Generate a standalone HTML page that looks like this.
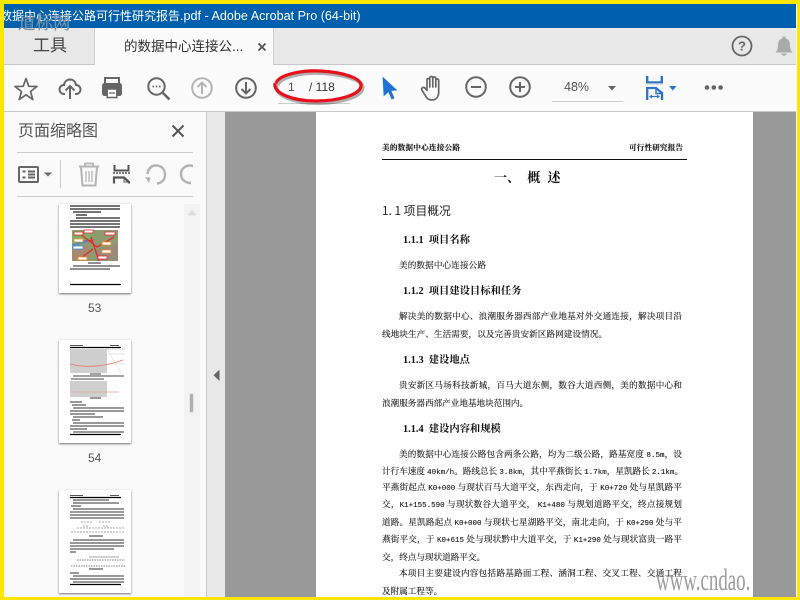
<!DOCTYPE html>
<html><head><meta charset="utf-8">
<style>
html,body{margin:0;padding:0;background:#fff}
#r{position:relative;width:800px;height:600px;overflow:hidden;background:#ffe600;font-family:"Liberation Sans","Noto Sans CJK SC",sans-serif}
#r div{position:absolute}
svg{position:absolute;overflow:visible}
.t{font-family:"Noto Serif CJK SC",serif;font-size:8.6px;line-height:12px;color:#111;white-space:nowrap;text-align:justify;text-align-last:justify;height:12px;filter:blur(.22px);-webkit-text-stroke:.12px #222}
.m{font-family:"Liberation Mono",monospace;font-size:7.5px}
.h{font-family:"Liberation Serif","Noto Serif CJK SC",serif;font-weight:700;font-size:10.3px;line-height:12px;color:#111;white-space:nowrap;filter:blur(.2px)}
.th{background:#fff;box-shadow:0 1px 2px rgba(0,0,0,.55);overflow:hidden}
.b{filter:blur(.35px)}
</style></head><body>
<div id="r">
<div style="left:4px;top:4px;width:793px;height:593px;background:#fff"></div>
<div style="left:4px;top:4px;width:792px;height:24px;background:#0060ae;overflow:hidden">
<div style="left:-4px;top:0;color:#fff;font-size:12.6px;line-height:25px;white-space:nowrap"><span style="font-size:12px">数据中心连接公路可行性研究报告</span>.pdf - Adobe Acrobat Pro (64-bit)</div>
</div>

<div style="left:4px;top:28px;width:792px;height:36px;background:#e8e8e8;border-bottom:1px solid #c8c8c8"></div>
<div style="left:94px;top:28px;width:180px;height:37px;background:#fbfbfb;border-left:1px solid #ccc;border-right:1px solid #ccc;box-sizing:border-box"></div>
<div style="left:18px;top:12px;font-family:'Noto Serif CJK SC',serif;font-size:17.500px;line-height:22px;color:#7f93a3;-webkit-text-stroke:.3px #7f93a3">道标网</div>
<div style="left:33px;top:36px;font-size:17px;line-height:20px;color:#444">工具</div>
<div style="left:124px;top:39px;font-size:13.500px;line-height:16px;color:#333;white-space:nowrap">的数据中心连接公...</div>
<svg style="left:257px;top:42px" width="10" height="10"><path d="M1.500 1.500L8.500 8.500M8.500 1.500L1.500 8.500" stroke="#555" stroke-width="1.800"/></svg>
<svg style="left:731px;top:35px" width="22" height="22"><circle cx="11" cy="11" r="9.500" fill="none" stroke="#666" stroke-width="1.800"/><text x="11" y="15.500" font-size="13" font-weight="700" fill="#666" text-anchor="middle" font-family="Liberation Sans">?</text></svg>
<svg style="left:775px;top:36px" width="18" height="21"><path d="M9 .5C10.200 .5 10.800 1.200 10.800 2.500C14.500 3.500 15 7 15 10C15 13 16 14.500 17.500 16.500L.5 16.500C2 14.500 3 13 3 10C3 7 3.500 3.500 7.200 2.500C7.200 1.200 7.800 .5 9 .5Z" fill="#aaa"/><path d="M6 17.500H12C11.500 20.300 6.500 20.300 6 17.500Z" fill="#aaa"/></svg>

<div style="left:4px;top:65px;width:792px;height:46px;background:#fbfbfb;border-bottom:1px solid #c8c8c8"></div>

<svg style="left:13px;top:76px" width="26" height="26" fill="none"><path d="M13 2.500L15.800 10.300L24 10.500L17.500 15.500L19.800 23.500L13 18.800L6.200 23.500L8.500 15.500L2 10.500L10.200 10.300Z" stroke="#666" stroke-width="1.700" stroke-linejoin="round"/></svg>
<svg style="left:58px;top:76px" width="24" height="24" fill="none" stroke="#666" stroke-width="2"><path d="M7 18H6C3 18 1.500 15.500 1.500 13.500C1.500 11 3.500 9 6 9C6.500 5.500 9 3.500 12 3.500C15 3.500 17.500 5.500 18 9C20.500 9 22.500 11 22.500 13.500C22.500 15.500 21 18 18 18H17"/><path d="M12 23V10M7.500 14.500L12 10L16.500 14.500"/></svg>
<svg style="left:102px;top:76px" width="20" height="23"><rect x="3" y="2" width="14" height="8" fill="none" stroke="#666" stroke-width="2"/><rect x="0" y="7" width="20" height="13" rx="2.500" fill="#666"/><rect x="5.200" y="13" width="9.600" height="8.500" fill="#fff" stroke="#666" stroke-width="1.500"/><path d="M7 17H13" stroke="#666" stroke-width="1.300"/></svg>
<svg style="left:147px;top:77px" width="24" height="24" fill="none" stroke="#666"><circle cx="9.500" cy="9.500" r="8.200" stroke-width="2"/><path d="M15.500 15.500L22.500 22.500" stroke-width="2.600"/><path d="M5.500 9.500H7M8.800 9.500H10.300M12 9.500H13.500" stroke-width="1.800"/></svg>
<svg style="left:191px;top:77px" width="22" height="22" fill="none" stroke="#b4b4b4" stroke-width="2"><circle cx="11" cy="11" r="9.800"/><path d="M11 17V5.500M6.500 10L11 5.500L15.500 10"/></svg>
<svg style="left:235px;top:77px" width="22" height="22" fill="none" stroke="#666" stroke-width="2"><circle cx="11" cy="11" r="9.800"/><path d="M11 5V16.500M6.500 12L11 16.500L15.500 12"/></svg>

<div style="left:278px;top:103px;width:72px;height:1px;background:#ccc"></div>
<div style="left:288px;top:80px;font-size:12px;line-height:15px;color:#555">1</div>
<div style="left:309px;top:80px;font-size:12px;line-height:15px;color:#333;white-space:nowrap">/ 118</div>
<svg style="left:270px;top:64px" width="96" height="42" fill="none"><path d="M6 19C9 11 30 6 50 7C72 8 92 14 91 22C90 31 68 37 46 37C24 37 3 30 5 19" stroke="#000" stroke-opacity=".3" stroke-width="4" transform="translate(1.500 2)"/><path d="M6 19C9 11 30 6 50 7C72 8 92 14 91 22C90 31 68 37 46 37C24 37 3 30 5 19" stroke="#e8111b" stroke-width="3.200"/></svg>

<svg style="left:382px;top:76px" width="16" height="24"><path d="M1 1.500L14.500 14L8.800 14.500L12 22L9.800 23L6.600 15.500L2 19.500Z" fill="#1f72d4" stroke="#1f72d4" stroke-width=".8"/></svg>
<svg style="left:420px;top:75px" width="24" height="27" fill="none" stroke="#666" stroke-width="1.700" stroke-linejoin="round" stroke-linecap="round"><path d="M7 14V5C7 3 9.800 3 9.800 5V12M9.800 12V3C9.800 1 12.800 1 12.800 3V12M12.800 12V3.500C12.800 1.500 15.800 1.500 15.800 3.500V12M15.800 12V5.500C15.800 3.500 18.700 3.500 18.700 5.500V17C18.700 22 16 25 12 25C8 25 6.500 23 5 20L1.800 15C1 13 3.500 11.500 5 13L7 15.500"/></svg>
<svg style="left:465px;top:76px" width="22" height="22" fill="none" stroke="#666" stroke-width="2"><circle cx="11" cy="11" r="9.800"/><path d="M6 11H16"/></svg>
<svg style="left:509px;top:76px" width="22" height="22" fill="none" stroke="#666" stroke-width="2"><circle cx="11" cy="11" r="9.800"/><path d="M6 11H16M11 6V16"/></svg>

<div style="left:552px;top:101px;width:71px;height:1px;background:#ccc"></div>
<div style="left:564px;top:80px;font-size:12.500px;line-height:15px;color:#555">48%</div>
<svg style="left:608px;top:86px" width="8" height="5"><path d="M0 0H8L4 4.500Z" fill="#666"/></svg>
<svg style="left:646px;top:76px" width="32" height="25" fill="none" stroke="#2a74cb"><path d="M1.200 0V6.500H15.800V0" stroke-width="2.400"/><path d="M0 8H17" stroke="#d4d4d4" stroke-width="1.500"/><path d="M1.200 24V12H10L16 17V24" stroke-width="2.300"/><path d="M10 12V17.500H15.500" stroke-width="1.400"/><path d="M5 20.500H12" stroke-width="1.200"/><path d="M3 20.500L6 18.500V22.500ZM14 20.500L11 18.500V22.500Z" fill="#2a74cb" stroke="none"/><path d="M23 10H30.500L26.800 14.500Z" fill="#2a74cb" stroke="none"/></svg>
<svg style="left:704px;top:84px" width="20" height="7" fill="#666"><circle cx="3" cy="3.500" r="2.300"/><circle cx="9.800" cy="3.500" r="2.300"/><circle cx="16.600" cy="3.500" r="2.300"/></svg>

<!-- side panel -->
<div style="left:4px;top:112px;width:202px;height:485px;background:#fafafa"></div>
<div style="left:18px;top:122px;font-size:16px;line-height:20px;color:#555;white-space:nowrap">页面缩略图</div>
<svg style="left:171px;top:124px" width="14" height="14"><path d="M1.500 1.500L12.500 12.500M12.500 1.500L1.500 12.500" stroke="#555" stroke-width="2"/></svg>
<div style="left:17px;top:152px;width:176px;height:1px;background:#ccc"></div>
<div style="left:17px;top:196px;width:176px;height:1px;background:#ccc"></div>
<div style="left:60px;top:160px;width:1px;height:28px;background:#ccc"></div>
<svg style="left:18px;top:166px" width="36" height="17" fill="none"><rect x="1" y="1" width="19" height="15" rx="1" stroke="#666" stroke-width="2"/><path d="M4.500 5.500H7.500M4.500 11.500H7.500M10 5.500H17M10 8.500H17M10 11.500H17" stroke="#666" stroke-width="2"/><path d="M26 6.500H34L30 10.500Z" fill="#666"/></svg>
<svg style="left:78px;top:162px" width="22" height="25" fill="none" stroke="#b4b4b4"><path d="M1 4.500H21" stroke-width="2"/><path d="M7 4V1.500H15V4" stroke-width="1.800"/><path d="M3 5L4.500 23.500H17.500L19 5" stroke-width="2"/><path d="M8 9V20M11 9V20M14 9V20" stroke-width="1.200"/></svg>
<svg style="left:112px;top:164px" width="20" height="20" fill="none" stroke="#555"><path d="M2.500 1V6.500H16.500V1" stroke-width="2"/><path d="M1 9H18" stroke-dasharray="2 1" stroke-width="1.500"/><path d="M2 19.500V13.500H12L17 18V19.500" stroke-width="2.200"/><path d="M12 13.500V18H17" stroke-width="1"/></svg>
<svg style="left:145px;top:163px" width="22" height="22" fill="none" stroke="#b4b4b4" stroke-width="2.400"><path d="M12 20.500C17 20 20 16.500 20 11.500C20 6 16 2.500 11 2.500C6 2.500 3 6 2.500 11"/><path d="M0 14L5.500 14.500L4 20Z" fill="#b4b4b4" stroke="none"/></svg>
<div style="left:176px;top:160px;width:17px;height:30px;overflow:hidden"><svg style="left:3px;top:3px" width="22" height="22" fill="none" stroke="#b4b4b4" stroke-width="2.400"><path d="M12 20C6 20 2 16.500 2 11C2 6 6 2.500 11 2.500C14 2.500 16 3.500 18 6"/></svg></div>

<div style="left:184px;top:204px;width:16px;height:393px;background:#f3f3f3"></div>
<svg style="left:187px;top:209px" width="10" height="7"><path d="M5 .5L9.500 6.500H.5Z" fill="#ddd"/></svg>
<div style="left:189px;top:393px;width:5px;height:20px;background:#b0b0b0;border:1px solid #e4e4e4;border-radius:2px;box-sizing:border-box"></div>

<!-- thumb 53 -->
<div class="th" style="left:59px;top:204px;width:72px;height:89px"></div>
<svg class="b" style="left:59px;top:204px" width="72" height="89">
<path d="M11 2H61M11 5H61M14 8H42M17 11H28M17 14H61M11 17H61M11 20H61M11 23H61" stroke="#222" stroke-width="1.300"/>
<rect x="13" y="26" width="46" height="31" fill="#8d9b70"/>
<path d="M13 26H35L30 37L13 39Z" fill="#7fb06b"/><path d="M35 47L59 39V57H40Z" fill="#9a8a7c"/><path d="M13 42H30V57H13Z" fill="#a78a6c"/>
<path d="M15 41C26 37 30 35 34 37M32 33L40 57M20 29L38 43L55 33M34 45L22 54" stroke="#e8262c" stroke-width="1.300" fill="none"/><path d="M14 41L29 37" stroke="#3f8fe0" stroke-width="1.500"/>
<g fill="#fff" stroke="#e8262c" stroke-width=".8"><rect x="15" y="28" width="9" height="3"/><rect x="25" y="26" width="9" height="3"/><rect x="46" y="28" width="10" height="3"/><rect x="14" y="42" width="10" height="3" stroke="#3f8fe0"/><rect x="43" y="38" width="9" height="3" stroke="#f08a2c"/><rect x="43" y="46" width="9" height="3" stroke="#f08a2c"/><rect x="19" y="53" width="9" height="3" stroke="#f08a2c"/><rect x="39" y="52" width="9" height="3"/><rect x="15" y="35" width="9" height="3" stroke="#f08a2c"/></g>
<path d="M29 59H42M14 62H61M11 65H51" stroke="#222" stroke-width="1.100"/>
<path d="M11 80.500H62" stroke="#000" stroke-width="1.200"/>
</svg>
<div style="left:88px;top:301px;font-size:12px;line-height:14px;color:#555">53</div>

<!-- thumb 54 -->
<div class="th" style="left:59px;top:340px;width:72px;height:103px"></div>
<svg class="b" style="left:59px;top:340px" width="72" height="103">
<path d="M11 5.500H24M51 5.500H60" stroke="#555" stroke-width="1"/><path d="M11 7.500H62" stroke="#000" stroke-width="1.200"/>
<rect x="11" y="9" width="37" height="24" fill="#cfcfcf"/><path d="M48 9H66M50 14H66M52 24H66M48 9L62 33" stroke="#ddd" stroke-width=".7"/>
<path d="M11 24C25 28 45 27 64 20" stroke="#e87a70" stroke-width=".9" fill="none"/>
<path d="M31 34H42M14 36H65M12 39H45" stroke="#444" stroke-width="1"/>
<rect x="11" y="41" width="37" height="16" fill="#cfcfcf"/><path d="M14 52H60" stroke="#e8a09a" stroke-width=".8"/>
<path d="M31 58H42M11 62H23M13 65H27M14 68H65M11 71H65M11 74H36M14 77H44M13 80H21M14 83H65M11 86H65M11 89H28M14 92H65" stroke="#333" stroke-width="1.100"/>
<path d="M11 94.500H62" stroke="#000" stroke-width="1.200"/>
</svg>
<div style="left:88px;top:451px;font-size:12px;line-height:14px;color:#555">54</div>

<!-- thumb 55 -->
<div class="th" style="left:59px;top:490px;width:72px;height:103px"></div>
<svg class="b" style="left:59px;top:490px" width="72" height="103">
<path d="M11 5.500H24M51 5.500H60" stroke="#555" stroke-width="1"/><path d="M11 7.500H62" stroke="#000" stroke-width="1.200"/>
<path d="M14 10H50M14 13H60M12 16H22M14 19H65M11 22H65M11 25H65M11 28H65" stroke="#333" stroke-width="1.100"/>
<path d="M18 38H66M22 32H34M40 32H52M24 36H30M44 36H50M12 42H66" stroke="#aaa" stroke-width="1" stroke-dasharray="2 1"/>
<path d="M30 46H44" stroke="#333"/><path d="M14 50H65M11 53H65M11 56H65M11 59H55M11 62H17" stroke="#333" stroke-width="1.100"/>
<path d="M18 70H66M12 76H66" stroke="#999" stroke-width="1.200" stroke-dasharray="1.500 1"/><path d="M30 67H60" stroke="#888" stroke-width=".7"/>
<path d="M30 79H44M11 83H20M14 86H65M11 89H65M14 92H65" stroke="#333" stroke-width="1.100"/>
<path d="M11 94.500H62" stroke="#000" stroke-width="1.200"/>
</svg>

<!-- splitter -->
<div style="left:206px;top:112px;width:19px;height:485px;background:#e8e8e8;border-left:1px solid #ccc;box-sizing:border-box"></div>
<svg style="left:213px;top:369px" width="7" height="13"><path d="M6.500 .5V12L.5 6.200Z" fill="#666"/></svg>

<!-- doc -->
<div style="left:225px;top:112px;width:571px;height:485px;background:#999"></div>
<div style="left:316px;top:112px;width:437px;height:485px;background:#fff"></div>

<div class="t" style="left:382px;top:142px;width:78px;font-size:7.600px;font-weight:700">美的数据中心连接公路</div>
<div class="t" style="left:629px;top:142px;width:54px;font-size:7.600px;font-weight:700">可行性研究报告</div>
<div style="left:382px;top:159px;width:305px;height:1px;background:#111"></div>
<div style="left:494px;top:168px;font-family:'Noto Serif CJK SC',serif;font-size:13px;line-height:18px;font-weight:700;color:#111;white-space:nowrap;word-spacing:4px">一、 概 述</div>
<div style="left:382px;top:203px;font-family:'Noto Sans CJK SC',sans-serif;font-size:11.800px;line-height:16px;color:#222;white-space:nowrap">1. 1 项目概况</div>

<div class="h" style="left:403px;top:235px">1.1.1 &nbsp;项目名称</div>
<div class="t" style="left:399px;top:259px;width:87px">美的数据中心连接公路</div>
<div class="h" style="left:403px;top:286px">1.1.2 &nbsp;项目建设目标和任务</div>
<div class="t" style="left:399px;top:310px;width:283px">解决美的数据中心、浪潮服务器西部产业地基对外交通连接，解决项目沿</div>
<div class="t" style="left:382px;top:328px;width:225px">线地块生产、生活需要，以及完善贵安新区路网建设情况。</div>
<div class="h" style="left:403px;top:355px">1.1.3 &nbsp;建设地点</div>
<div class="t" style="left:399px;top:379px;width:283px">贵安新区马场科技新城，百马大道东侧，数谷大道西侧，美的数据中心和</div>
<div class="t" style="left:382px;top:397px;width:146px">浪潮服务器西部产业地基地块范围内。</div>
<div class="h" style="left:403px;top:424px">1.1.4 &nbsp;建设内容和规模</div>
<div class="t" style="left:399px;top:448px;width:283px">美的数据中心连接公路包含两条公路，均为二级公路，路基宽度 <span class="m">8.5m</span>，设</div>
<div class="t" style="left:382px;top:465px;width:300px">计行车速度 <span class="m">40km/h</span>。路线总长 <span class="m">3.8km</span>，其中平燕街长 <span class="m">1.7km</span>，星凯路长 <span class="m">2.1km</span>。</div>
<div class="t" style="left:382px;top:481px;width:300px">平燕街起点 <span class="m">K0+000</span> 与现状百马大道平交，东西走向，于 <span class="m">K0+720</span> 处与星凯路平</div>
<div class="t" style="left:382px;top:498px;width:300px">交，<span class="m">K1+155.590</span> 与现状数谷大道平交， <span class="m">K1+480</span> 与规划道路平交，终点接规划</div>
<div class="t" style="left:382px;top:516px;width:300px">道路。星凯路起点 <span class="m">K0+000</span> 与现状七星湖路平交，南北走向，于 <span class="m">K0+290</span> 处与平</div>
<div class="t" style="left:382px;top:533px;width:300px">燕街平交，于 <span class="m">K0+615</span> 处与现状黔中大道平交，于 <span class="m">K1+290</span> 处与现状富贵一路平</div>
<div class="t" style="left:382px;top:551px;width:103px">交，终点与现状道路平交。</div>
<div class="t" style="left:399px;top:567px;width:283px">本项目主要建设内容包括路基路面工程、涵洞工程、交叉工程、交通工程</div>
<div class="t" style="left:382px;top:585px;width:60px">及附属工程等。</div>

<div style="left:656px;top:562px;font-family:'Liberation Serif',serif;font-size:31px;line-height:36px;color:#9c9c9c;white-space:nowrap;transform:scaleX(.61);transform-origin:0 0">www.cndao.</div>
</div>
</body></html>
